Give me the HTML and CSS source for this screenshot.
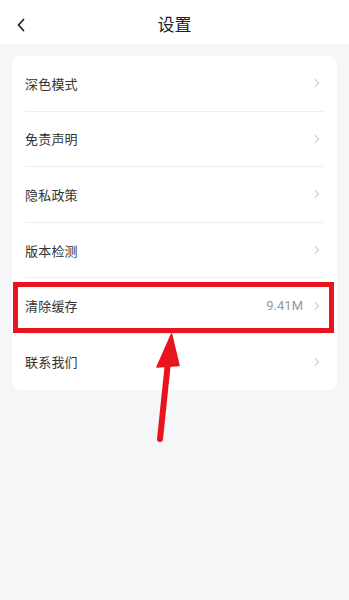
FILE: index.html
```html
<!DOCTYPE html>
<html lang="zh-CN">
<head>
<meta charset="utf-8">
<title>设置</title>
<link rel="stylesheet" href="styles.css">
</head>
<body>
<div class="page">
  <header class="header">
    <span class="back">
      <svg width="10" height="14" viewBox="0 0 10 14"><path d="M7.5 1.5 L2.5 7 L7.5 12.5" fill="none" stroke="#222" stroke-width="1.8" stroke-linecap="round" stroke-linejoin="round"/></svg>
    </span>
    <h1 class="title">设置</h1>
  </header>
  <main class="content">
    <ul class="card">
      <li class="row"><span class="label">深色模式</span><span class="right"><span class="chev"></span></span></li>
      <li class="row"><span class="label">免责声明</span><span class="right"><span class="chev"></span></span></li>
      <li class="row"><span class="label">隐私政策</span><span class="right"><span class="chev"></span></span></li>
      <li class="row"><span class="label">版本检测</span><span class="right"><span class="chev"></span></span></li>
      <li class="row"><span class="label">清除缓存</span><span class="right"><span class="value">9.41M</span><span class="chev"></span></span></li>
      <li class="row"><span class="label">联系我们</span><span class="right"><span class="chev"></span></span></li>
    </ul>
  </main>
  <svg class="annot" width="349" height="600" viewBox="0 0 349 600">
    <rect x="15.5" y="284.5" width="316" height="46" fill="none" stroke="#e8141e" stroke-width="5"/>
    <line x1="160" y1="439" x2="168" y2="362" stroke="#e8141e" stroke-width="6" stroke-linecap="round"/>
    <polygon points="171.5,334 157,367 179,365.5" fill="#e8141e" stroke="#e8141e" stroke-width="1.5" stroke-linejoin="round"/>
  </svg>
</div>
</body>
</html>
```
FILE: styles.css
```css
* { box-sizing: border-box; }
html, body { margin: 0; padding: 0; }
body {
  font-family: "Noto Sans CJK SC", "Noto Sans", sans-serif;
  background: #f5f6f8;
  color: #333;
}
.page {
  position: relative;
  width: 349px;
  height: 600px;
  background: #f5f6f8;
  overflow: hidden;
}
.header {
  position: relative;
  height: 44px;
  background: #fff;
  display: flex;
  align-items: center;
  justify-content: center;
}
.back {
  position: absolute;
  left: 16px;
  top: 18px;
  display: flex;
}
.title {
  margin: 0;
  font-size: 17px;
  font-weight: 400;
  color: #222;
  line-height: 1;
  padding-top: 2px;
}
.content {
  padding: 12px 12px 0;
}
.card {
  list-style: none;
  margin: 0;
  padding: 0 14px 0 13px;
  background: #fff;
  border-radius: 8px;
}
.row {
  height: 55.6px;
  display: flex;
  align-items: center;
  justify-content: space-between;
  border-bottom: 1px solid #eeeeee;
}
.row:last-child { border-bottom: none; }
.label {
  font-size: 13px;
  color: #333;
  letter-spacing: 0.2px;
}
.right {
  display: flex;
  align-items: center;
  gap: 9px;
}
.value {
  font-family: "Roboto", "Noto Sans", sans-serif;
  font-size: 13px;
  color: #999;
}
.chev {
  width: 6px;
  height: 6px;
  border-top: 1px solid #ccc;
  border-right: 1px solid #ccc;
  transform: rotate(45deg);
  margin-right: 5px;
}
.annot {
  position: absolute;
  left: 0;
  top: 0;
  pointer-events: none;
}
```
